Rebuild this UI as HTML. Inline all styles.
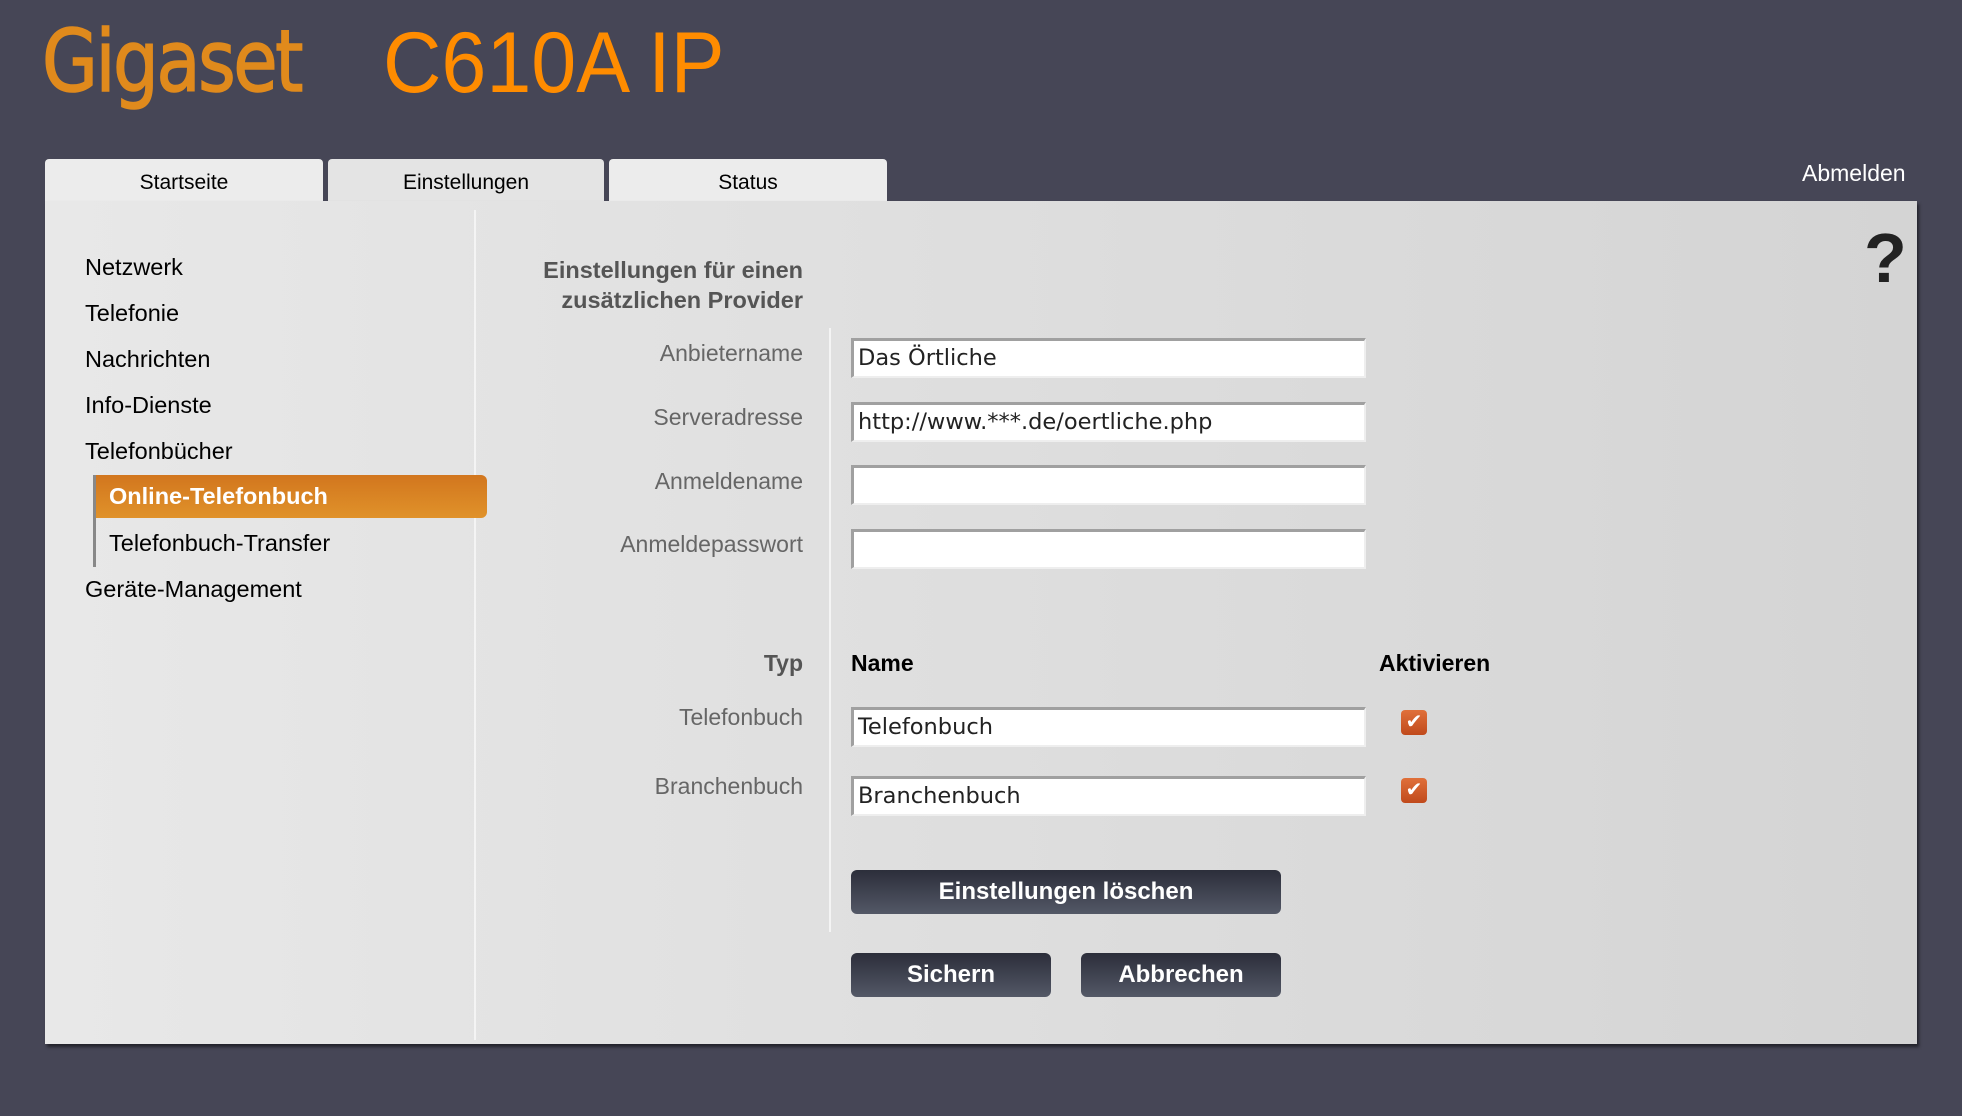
<!DOCTYPE html>
<html><head><meta charset="utf-8"><style>
*{margin:0;padding:0;box-sizing:border-box}
body{width:1962px;height:1116px;background:#464656;font-family:"Liberation Sans",sans-serif;position:relative;overflow:hidden}
.a{position:absolute}
.logo{left:42px;top:12px;font-size:86px;color:#e08a1c;letter-spacing:-3px;font-family:"DejaVu Sans",sans-serif;transform:scaleX(0.84);transform-origin:left;-webkit-text-stroke:1.5px #e08a1c}
.model{left:383px;top:14px;font-size:86px;color:#ff8c00;transform:scaleX(0.94);transform-origin:left}
.tab{top:159px;height:43px;background:#ececec;border-radius:4px 4px 0 0;font-size:21px;text-align:center;line-height:48px;color:#000}
.panel{left:45px;top:201px;width:1872px;height:843px;background:linear-gradient(90deg,#e8e8e8,#d4d4d4);box-shadow:2px 3px 3px rgba(0,0,0,.5)}
.nav{left:85px;font-size:23.5px;color:#000}
.lbl{right:1159px;font-size:23px;color:#666;text-align:right}
.inp{left:851px;width:515px;height:40px;background:#fff;border-top:3px solid #a0a0a0;border-left:3px solid #a0a0a0;border-right:2px solid #eee;border-bottom:2px solid #eee;font-family:"DejaVu Sans",sans-serif;font-size:22.5px;padding-left:4px;line-height:35px;color:#222}
.cb{left:1401px;width:26px;height:25px;border-radius:4px;background:linear-gradient(#e0703a,#c04a1c);color:#fff;font-size:20px;text-align:center;line-height:25px}
.btn{height:44px;border-radius:6px;background:linear-gradient(#2c2e3a,#535866);color:#fff;font-weight:bold;font-size:24px;text-align:center;line-height:44px}
.h{font-weight:bold;font-size:23px;color:#000}
</style></head><body>
<div class="a logo">Gigaset</div>
<div class="a model">C610A IP</div>
<div class="a tab" style="left:45px;width:278px">Startseite</div>
<div class="a tab" style="left:328px;width:276px;background:#e4e4e4;height:45px">Einstellungen</div>
<div class="a tab" style="left:609px;width:278px">Status</div>
<div class="a" style="left:1802px;top:160px;font-size:23px;color:#fff">Abmelden</div>
<div class="a panel"></div>
<div class="a" style="left:474px;top:210px;width:2px;height:830px;background:#f4f4f4"></div>
<div class="a nav" style="top:254px">Netzwerk</div>
<div class="a nav" style="top:300px">Telefonie</div>
<div class="a nav" style="top:346px">Nachrichten</div>
<div class="a nav" style="top:392px">Info-Dienste</div>
<div class="a nav" style="top:438px">Telefonbücher</div>
<div class="a" style="left:93px;top:475px;width:3px;height:92px;background:#888"></div>
<div class="a" style="left:96px;top:475px;width:391px;height:43px;background:linear-gradient(#d2761e,#e0922a);border-radius:0 6px 6px 0;color:#fff;font-weight:bold;font-size:23.5px;line-height:43px;padding-left:13px">Online-Telefonbuch</div>
<div class="a nav" style="left:109px;top:530px">Telefonbuch-Transfer</div>
<div class="a nav" style="top:576px">Geräte-Management</div>
<div class="a" style="right:1159px;top:255px;text-align:right;font-weight:bold;font-size:23.5px;color:#555;line-height:30px">Einstellungen für einen<br>zusätzlichen Provider</div>
<div class="a" style="left:829px;top:328px;width:2px;height:604px;background:#f4f4f4"></div>
<div class="a lbl" style="top:340px">Anbietername</div>
<div class="a lbl" style="top:404px">Serveradresse</div>
<div class="a lbl" style="top:468px">Anmeldename</div>
<div class="a lbl" style="top:531px">Anmeldepasswort</div>
<div class="a inp" style="top:338px">Das Örtliche</div>
<div class="a inp" style="top:402px">http://www.***.de/oertliche.php</div>
<div class="a inp" style="top:465px"></div>
<div class="a inp" style="top:529px"></div>
<div class="a lbl h" style="top:650px;color:#555">Typ</div>
<div class="a h" style="left:851px;top:650px">Name</div>
<div class="a h" style="left:1379px;top:650px">Aktivieren</div>
<div class="a lbl" style="top:704px">Telefonbuch</div>
<div class="a lbl" style="top:773px">Branchenbuch</div>
<div class="a inp" style="top:707px">Telefonbuch</div>
<div class="a inp" style="top:776px">Branchenbuch</div>
<div class="a cb" style="top:710px">✔</div>
<div class="a cb" style="top:778px">✔</div>
<div class="a btn" style="left:851px;top:870px;width:430px">Einstellungen löschen</div>
<div class="a btn" style="left:851px;top:953px;width:200px">Sichern</div>
<div class="a btn" style="left:1081px;top:953px;width:200px">Abbrechen</div>
<div class="a" style="left:1864px;top:218px;font-size:70px;font-weight:bold;color:#222">?</div>
</body></html>
